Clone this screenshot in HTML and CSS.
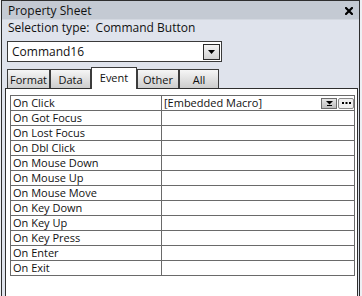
FILE: index.html
```html
<!DOCTYPE html>
<html lang="en">
<head>
  <meta charset="UTF-8" />
  <title>Property Sheet</title>
  <link rel="stylesheet" href="styles.css">
</head>
<body>
  <div class="window">
    <div class="titlebar">
      <span class="title">Property Sheet</span>
      <svg class="close" width="8" height="8" viewBox="0 0 8 8">
        <path d="M1 1 L7 7 M7 1 L1 7" stroke="#000" stroke-width="2.2" stroke-linecap="square"/>
      </svg>
    </div>
    <div class="sheet">
      <div class="selection">Selection type:&nbsp; Command Button</div>
      <div class="combo">
        <span class="combo-text">Command16</span>
        <span class="drop">
          <svg width="7" height="4" viewBox="0 0 7 4"><path d="M0 0 H7 L3.5 4 Z" fill="#000"/></svg>
        </span>
      </div>
      <div class="tabs">
        <div class="tab tab-format">Format</div>
        <div class="tab tab-data">Data</div>
        <div class="tab tab-event active">Event</div>
        <div class="tab tab-other">Other</div>
        <div class="tab tab-all">All</div>
      </div>
      <div class="panel">
        <table class="props">
          <tr>
            <td class="name">On Click</td>
            <td class="value">
              <div class="value-row">
                <span>[Embedded Macro]</span>
                <span class="mini-btns">
                  <span class="mini drop-mini">
                    <svg width="7" height="5" viewBox="0 0 7 5"><path d="M0 0 H7 L3.5 3.5 Z" fill="#000"/><path d="M1 4.5 H6" stroke="#000" stroke-width="1"/></svg>
                  </span>
                  <span class="mini dots">
                    <svg width="9" height="2" viewBox="0 0 9 2"><path d="M0 0h2v2h-2z M3.5 0h2v2h-2z M7 0h2v2h-2z" fill="#000"/></svg>
                  </span>
                </span>
              </div>
            </td>
          </tr>
          <tr><td class="name">On Got Focus</td><td class="value"></td></tr>
          <tr><td class="name">On Lost Focus</td><td class="value"></td></tr>
          <tr><td class="name">On Dbl Click</td><td class="value"></td></tr>
          <tr><td class="name">On Mouse Down</td><td class="value"></td></tr>
          <tr><td class="name">On Mouse Up</td><td class="value"></td></tr>
          <tr><td class="name">On Mouse Move</td><td class="value"></td></tr>
          <tr><td class="name">On Key Down</td><td class="value"></td></tr>
          <tr><td class="name">On Key Up</td><td class="value"></td></tr>
          <tr><td class="name">On Key Press</td><td class="value"></td></tr>
          <tr><td class="name">On Enter</td><td class="value"></td></tr>
          <tr><td class="name">On Exit</td><td class="value"></td></tr>
        </table>
      </div>
    </div>
  </div>
</body>
</html>
```

FILE: styles.css
```css
* {
  box-sizing: border-box;
  margin: 0;
  padding: 0;
}
body {
  font-family: 'Open Sans', 'Noto Sans', sans-serif;
  font-size: 12px;
  color: #111;
  background: #eef0f4;
  width: 362px;
  height: 296px;
  overflow: hidden;
}
.window {
  margin-left: 1px;
  width: 359px;
  height: 296px;
  border: 1px solid #2e2e2e;
  border-bottom: none;
  display: flex;
  flex-direction: column;
  background: #dfe3ec;
}
.titlebar {
  height: 19px;
  background: #c4cad3;
  border-bottom: 1px solid #d3d8e0;
  display: flex;
  align-items: center;
  justify-content: space-between;
  padding: 0 6px 0 6px;
}
.title {
  line-height: 16px;
  margin-top: 1px;
}
.close {
  display: block;
  margin-top: 2px;
}
.sheet {
  flex: 1;
  display: flex;
  flex-direction: column;
}
.selection {
  height: 21px;
  line-height: 16px;
  padding-left: 6px;
}
.combo {
  margin-left: 5px;
  width: 215px;
  height: 21px;
  background: #fff;
  border: 1px solid #3a3a3a;
  display: flex;
  align-items: center;
  justify-content: space-between;
  padding: 0 1px 0 4px;
}
.drop {
  width: 17px;
  height: 16px;
  border: 1px solid #2b2b2b;
  background: linear-gradient(#f4f4f4, #d2d2d2);
  display: flex;
  align-items: center;
  justify-content: center;
  padding-top: 1px;
}
.drop svg {
  display: block;
}
.tabs {
  margin-top: 5px;
  margin-left: 5px;
  height: 21px;
  display: flex;
  align-items: flex-end;
  font-size: 11px;
}
.tab {
  height: 19px;
  border: 1px solid #3c3c3c;
  border-bottom: none;
  background: linear-gradient(#f6f6f6, #cdcdcd);
  text-align: center;
  line-height: 16px;
  padding-top: 2px;
}
.tab-format { width: 43px; }
.tab-data { width: 41px; }
.tab-event { width: 46px; }
.tab-other { width: 42px; }
.tab-all { width: 40px; }
.tab.active {
  height: 22px;
  background: #fff;
  margin-bottom: -1px;
  position: relative;
  z-index: 1;
  line-height: 16px;
  padding-top: 2px;
}
.panel {
  flex: 1;
  margin-left: 3px;
  margin-right: 1px;
  background: #fff;
  border: 1px solid #2e2e2e;
  border-bottom: none;
  padding: 6px 1px 0 4px;
}
.props {
  width: 345px;
  border-collapse: collapse;
  font-size: 11px;
}
.props td {
  border: 1px solid #6a6a6a;
  height: 15px;
  padding: 0 0 0 2px;
  line-height: 14px;
  white-space: nowrap;
}
.props .name {
  width: 151px;
}
.value-row {
  display: flex;
  justify-content: space-between;
  align-items: center;
  height: 14px;
}
.mini-btns {
  display: flex;
  gap: 1px;
}
.mini {
  width: 16px;
  height: 11px;
  display: flex;
  align-items: center;
  justify-content: center;
}
.mini svg {
  display: block;
}
.drop-mini {
  border: 1px solid #6c6c6c;
  background: linear-gradient(#e6e6e6, #bdbdbd);
  padding-top: 1px;
}
.dots {
  border: 1px solid #8a8a8a;
  border-radius: 2px;
  background: #f0f0f0;
}
```
